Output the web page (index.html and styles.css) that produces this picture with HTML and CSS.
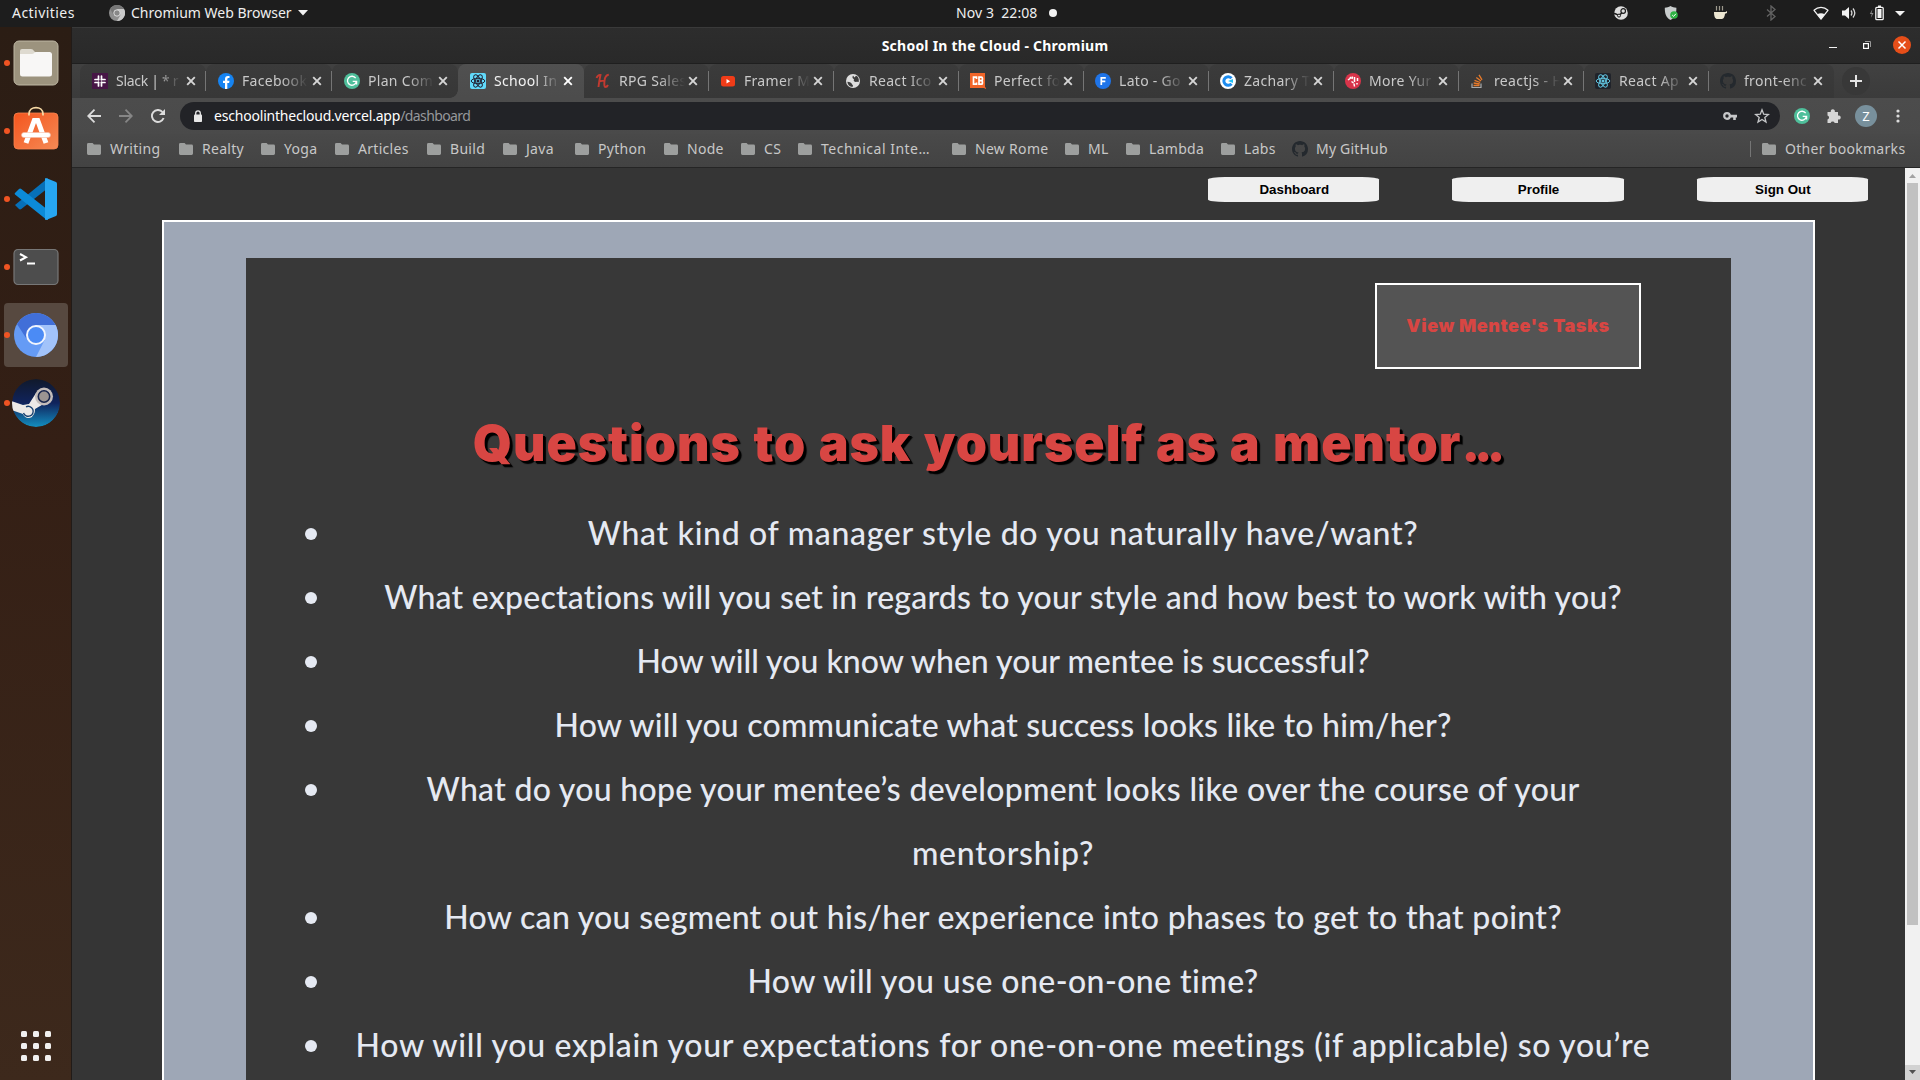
FILE: index.html
```
<!DOCTYPE html>
<html lang="en">
<head>
<meta charset="utf-8">
<title>School In the Cloud</title>
<link rel="stylesheet" href="styles.css">
</head>
<body>
<svg width="0" height="0" class="defs" aria-hidden="true">
  <symbol id="folder" viewBox="0 0 14 12"><path d="M1.4 0h4.2L7 1.5h5.6A1.4 1.4 0 0 1 14 2.9v7.7a1.4 1.4 0 0 1-1.4 1.4H1.4A1.4 1.4 0 0 1 0 10.6V1.4A1.4 1.4 0 0 1 1.4 0z" fill="#9d9f9e"/></symbol>
  <symbol id="close" viewBox="0 0 10 10"><path d="M1.2 1.2l7.6 7.6M8.8 1.2L1.2 8.8" stroke="currentColor" stroke-width="1.9"/></symbol>
  <symbol id="github" viewBox="0 0 16 16"><path fill="#24292e" d="M8 0C3.58 0 0 3.58 0 8c0 3.54 2.29 6.53 5.47 7.59.4.07.55-.17.55-.38 0-.19-.01-.82-.01-1.49-2.01.37-2.53-.49-2.69-.94-.09-.23-.48-.94-.82-1.13-.28-.15-.68-.52-.01-.53.63-.01 1.08.58 1.23.82.72 1.21 1.87.87 2.33.66.07-.52.28-.87.51-1.07-1.78-.2-3.64-.89-3.64-3.95 0-.87.31-1.59.82-2.15-.08-.2-.36-1.02.08-2.12 0 0 .67-.21 2.2.82.64-.18 1.32-.27 2-.27s1.36.09 2 .27c1.53-1.04 2.2-.82 2.2-.82.44 1.1.16 1.92.08 2.12.51.56.82 1.27.82 2.15 0 3.07-1.87 3.75-3.65 3.95.29.25.54.73.54 1.48 0 1.07-.01 1.93-.01 2.2 0 .21.15.46.55.38A8.01 8.01 0 0 0 16 8c0-4.42-3.58-8-8-8z"/></symbol>
  <symbol id="grammarly" viewBox="0 0 16 16"><circle cx="8" cy="8" r="8" fill="#4fbf9b"/><path d="M11.7 5.2A4.5 4.5 0 1 0 12.3 9M12.6 11.4V8.4H8.7" fill="none" stroke="#fff" stroke-width="1.3"/></symbol>
  <symbol id="atom" viewBox="0 0 16 16"><g fill="none" stroke="currentColor" stroke-width="1"><ellipse cx="8" cy="8" rx="6.8" ry="2.7"/><ellipse cx="8" cy="8" rx="6.8" ry="2.7" transform="rotate(60 8 8)"/><ellipse cx="8" cy="8" rx="6.8" ry="2.7" transform="rotate(120 8 8)"/></g><circle cx="8" cy="8" r="1.5" fill="currentColor"/></symbol>
</svg>

<header class="topbar">
  <span class="activities">Activities</span>
  <span class="app-menu">
    <svg width="16" height="16" viewBox="0 0 16 16"><circle cx="8" cy="8" r="8" fill="#8f8f8f"/><path d="M8 4h7A8 8 0 0 1 8 16l3.5-6z" fill="#c9c9c9"/><path d="M1.2 4L4.5 10 8 8 8 4h7A8 8 0 0 0 1.2 4z" fill="#777"/><circle cx="8" cy="8" r="3.2" fill="#888" stroke="#ddd" stroke-width="1"/></svg>
    <span class="app-name">Chromium Web Browser</span>
    <svg width="10" height="6" viewBox="0 0 10 6"><path d="M0 0h10L5 5.6z" fill="#f2f2f2"/></svg>
  </span>
  <span class="clock">Nov 3&ensp;22:08<i></i></span>
  <div class="status">
    <svg width="16" height="16" viewBox="0 0 16 16"><circle cx="8" cy="8" r="6.8" fill="#dedede"/><path d="M1 8.2l5.2 2.2L9.8 7" stroke="#1d1d1d" stroke-width="1.6" fill="none"/><circle cx="10.2" cy="6" r="2.3" fill="#dedede" stroke="#1d1d1d" stroke-width="1.2"/><circle cx="6" cy="10.6" r="1.5" fill="#dedede" stroke="#1d1d1d"/></svg>
    <svg width="16" height="16" viewBox="0 0 16 16"><path d="M7.500 1C5.500 2.300 4 2.600 1.800 2.800c0 6 1 9.500 5.700 12.200 4.700-2.700 5.900-6.200 5.900-12.200C11 2.600 9.500 2.300 7.500 1z" fill="#c8cccc"/><circle cx="11" cy="10" r="3.800" fill="#2fb344"/><path d="M9.200 10l1.400 1.400 2.300-2.600" stroke="#fff" fill="none"/></svg>
    <svg width="16" height="16" viewBox="0 0 16 16"><path d="M2 7h11.500l1.500-1v2l-2 .7c-.4 4-2 5.300-3.500 5.300H5.500C3 14 2 11.500 2 7z" fill="#ece6d2"/><path d="M4.500 1v4.500M7.500 1v4.500M10.500 1v4.500" stroke="#9c988c" stroke-width="1.200"/></svg>
    <svg width="16" height="16" viewBox="0 0 16 16"><path d="M4 4.500l8 7L8 15V1l4 3.500-8 7" stroke="#636363" stroke-width="1.300" fill="none"/></svg>
    <svg width="16" height="16" viewBox="0 0 16 16"><path d="M8 14L1 5.300C5 1.500 11 1.500 15 5.300z" fill="none" stroke="#f2f2f2" stroke-width="1.200" stroke-linejoin="round"/><path d="M8 14.400L4.300 9.300C6.500 7.800 9.500 7.800 11.700 9.300z" fill="#f2f2f2"/></svg>
    <svg width="16" height="16" viewBox="0 0 16 16"><path d="M1 5.500h3L8 2v12l-4-3.500H1z" fill="#f2f2f2"/><path d="M10 5.500q1.800 2.500 0 5M12 3.500q3.600 4.500 0 9" stroke="#d8d8d8" fill="none" stroke-width="1.300"/></svg>
    <svg width="16" height="16" viewBox="0 0 16 16"><path d="M3.500 4L.8 9h2l-1 4L4.500 8h-2z" fill="#8c8c8c"/><rect x="6.800" y="2.300" width="7.400" height="12.400" rx="1" fill="none" stroke="#f2f2f2" stroke-width="1.300"/><path d="M9 .5h3V2H9zM8.500 4h4v9h-4z" fill="#f2f2f2"/></svg>
    <svg width="16" height="16" viewBox="0 0 16 16"><path d="M3 6h10l-5 5z" fill="#f2f2f2"/></svg>
  </div>
</header>

<div class="desktop">
  <nav class="dock">
    <div class="launcher"><i></i>
      <svg width="48" height="48" viewBox="0 0 48 48"><rect x="2" y="2" width="44" height="44" rx="5" fill="#9c937e" stroke="#beb7a3"/><path d="M8 12a2 2 0 0 1 2-2h9q2 0 3 2l1 1v8H8z" fill="#dedad0"/><path d="M8 15h11.500q2 0 3-1.500L23.500 13H38a2.500 2.500 0 0 1 2 2v20a2.500 2.500 0 0 1-2.500 2.500h-27A2.500 2.500 0 0 1 8 35z" fill="#f8f7f6"/></svg></div>
    <div class="launcher"><i></i>
      <svg class="tall" width="48" height="48" viewBox="0 0 48 48"><defs><linearGradient id="bag" x2="1" y2="1"><stop stop-color="#f4551e"/><stop offset="1" stop-color="#f58a55"/></linearGradient></defs><rect x="2" y="6" width="44" height="36" rx="4" fill="url(#bag)" stroke="#f9844f" stroke-width=".8"/><path d="M17 8.500V7C17-1.500 31-1.500 31 7v1.500" fill="none" stroke="#f7d9a5" stroke-width="1.800"/><path d="M14 36L22.300 13.500h3.400L34 36" fill="none" stroke="#fff" stroke-width="5"/><rect x="9.500" y="25.500" width="29" height="5" rx="2.500" fill="#fff" stroke="#f5b79d" stroke-width=".6"/></svg></div>
    <div class="launcher"><i></i>
      <svg width="48" height="48" viewBox="0 0 48 48"><path d="M3 30l4 4q1 .8 2.300 0L36 13V3z" fill="#0770b8"/><path d="M3 18l4-4q1-.8 2.300 0L36 35v10q-1.500 0-3-1.500L3 19.500q-.8-.7 0-1.500z" fill="#0c8bd8"/><path d="M34 3l10 4q1 .5 1 2v30q0 1.500-1 2l-10 4q-1 0-1-1V4q0-1 1-1z" fill="#27a6f1"/></svg></div>
    <div class="launcher"><i></i>
      <svg width="48" height="48" viewBox="0 0 48 48"><rect x="2" y="6.500" width="44" height="35" rx="4" fill="#4d4d4d" stroke="#777" stroke-width="1.200"/><path d="M8 11l6 3.200-6 3.300M15 20.500h8" fill="none" stroke="#fff" stroke-width="2"/></svg></div>
    <div class="launcher active"><i></i>
      <svg width="48" height="48" viewBox="0 0 48 48"><circle cx="24" cy="24" r="22" fill="#659bf5"/><path d="M24 14h19.600A22 22 0 0 1 24 46l8.700-17z" fill="#a2c3fa"/><path d="M5 13A22 22 0 0 1 43.600 14H24L15.300 29z" fill="#416fd8"/><circle cx="24" cy="24" r="9" fill="#4b8bf5" stroke="#f1f5fd" stroke-width="2"/></svg></div>
    <div class="launcher"><i></i>
      <svg width="48" height="48" viewBox="0 0 48 48"><defs><linearGradient id="steam" x2="0" y2="1"><stop stop-color="#10192b"/><stop offset=".5" stop-color="#10235c"/><stop offset="1" stop-color="#138fc0"/></linearGradient><clipPath id="disc"><circle cx="24" cy="24" r="24"/></clipPath></defs><g clip-path="url(#disc)"><circle cx="24" cy="24" r="24" fill="url(#steam)"/><path d="M24 14L17 25l-6 1-12-4v9l12 4q3 6 9 3l3-8 12-7z" fill="#ece9e7"/><circle cx="32" cy="17.500" r="9" fill="#c4bdba"/><circle cx="32" cy="17.500" r="5.700" fill="#9c9592" stroke="#17244b" stroke-width="1.600"/><circle cx="16.500" cy="32" r="6.400" fill="#ece9e7"/><path d="M14 27.800a5 5 0 1 1-2.500 6.200" fill="none" stroke="#17406f" stroke-width="1.400"/></g></svg></div>
    <div class="app-grid"><b></b><b></b><b></b><b></b><b></b><b></b><b></b><b></b><b></b></div>
  </nav>

  <main class="window">
    <div class="titlebar">
      <span class="window-title">School In the Cloud - Chromium</span>
      <div class="controls">
        <svg width="8" height="8" viewBox="0 0 8 8"><path d="M0 6.500h8" stroke="#f2f2f2"/></svg>
        <svg width="8" height="8" viewBox="0 0 8 8"><rect x=".6" y="2.600" width="4.800" height="4.800" fill="none" stroke="#fff" stroke-width="1.200"/><path d="M2 .5h5.500V6" fill="none" stroke="#999"/></svg>
        <svg width="18" height="18" viewBox="0 0 18 18"><circle cx="9" cy="9" r="9" fill="#e64e19"/><path d="M5.500 5.500l7 7M12.500 5.500l-7 7" stroke="#fff" stroke-width="1.500"/></svg>
      </div>
    </div>

    <div class="tabs">
      <div class="tab wide slack"><svg class="fav" viewBox="0 0 16 16"><path d="M0 0h16v16H0z" fill="#471646"/><path d="M6.500 3v3.800M9.500 3v3.800M6.500 9.200V13M9.500 9.200V13M3 6.500h3.800M9.200 6.500H13M3 9.500h3.800M9.200 9.500H13" stroke="#fff" stroke-width="1.700" stroke-linecap="round"/></svg><span>Slack | * r</span><svg class="x"><use href="#close"/></svg></div>
      <div class="tab wide"><svg class="fav" viewBox="0 0 16 16"><circle cx="8" cy="8" r="8" fill="#1684f2"/><path d="M7 16V10H5V7.700h2V6q0-3 2.900-3l1.600.1v2h-1Q9.300 5.100 9.300 6.300v1.400h2.200L11.100 10H9.300v6z" fill="#fff"/></svg><span>Facebook</span><svg class="x"><use href="#close"/></svg></div>
      <div class="tab wide last"><svg class="fav"><use href="#grammarly"/></svg><span>Plan Com</span><svg class="x"><use href="#close"/></svg></div>
      <div class="tab wide current"><svg class="fav cyan"><use href="#atom"/></svg><span>School In</span><svg class="x"><use href="#close"/></svg></div>
      <div class="tab"><svg class="fav" viewBox="0 0 16 16"><path d="M1.500 5Q3 1.500 5.500 2 4.500 6 3.500 14M13.800 1.800Q10 2 9.500 8 8.800 14 10.500 14q1.500 0 2.500-2M4 8.500q4-1 6-.8" fill="none" stroke="#c23a30" stroke-width="1.900"/></svg><span>RPG Sales</span><svg class="x"><use href="#close"/></svg></div>
      <div class="tab"><svg class="fav" viewBox="0 0 16 16"><rect x="1" y="3" width="14" height="10.500" rx="2.500" fill="#f03c18"/><path d="M6.500 6v4.600L10.200 8.300z" fill="#fff"/></svg><span>Framer M</span><svg class="x"><use href="#close"/></svg></div>
      <div class="tab"><svg class="fav" viewBox="0 0 16 16"><circle cx="8" cy="8" r="7" fill="#dedede"/><path d="M2.300 8.800q4 .5 4.700 2.400 1.800 1 .5 2.800Q3 13.500 2.300 8.800zM8 2.500Q6.500 5 9 6.300q-1 2 1.500 2.700 1.500-.5 3.200 0Q14.500 4 11 2.800L9.500 4.500z" fill="#3c3c3c"/></svg><span>React Ico</span><svg class="x"><use href="#close"/></svg></div>
      <div class="tab"><svg class="fav" viewBox="0 0 16 16"><path d="M0 0h15v14.500h1V16l-2-1H0z" fill="#f16529"/><path d="M6.500 6V4.200h-3v7h3V9.500M9 4.200h2.400q1 0 1 1v1.500q0 1-1 1H9h2.400q1 0 1 1v1.500q0 1-1 1H9z" fill="none" stroke="#fff" stroke-width="1.700"/></svg><span>Perfect fo</span><svg class="x"><use href="#close"/></svg></div>
      <div class="tab"><svg class="fav" viewBox="0 0 16 16"><circle cx="8" cy="8" r="8" fill="#1f74e8"/><path d="M6.300 12V4.800h4.500M6.300 8.300h4" fill="none" stroke="#fff" stroke-width="1.700"/></svg><span>Lato - Go</span><svg class="x"><use href="#close"/></svg></div>
      <div class="tab"><svg class="fav" viewBox="0 0 16 16"><circle cx="8" cy="8" r="8" fill="#fff"/><path d="M11.500 5.300A4.300 4.300 0 1 0 11.500 10.700" fill="none" stroke="#1c8cf0" stroke-width="3"/><path d="M8 8l5-2v4z" fill="#24c2f4"/></svg><span>Zachary T</span><svg class="x"><use href="#close"/></svg></div>
      <div class="tab"><svg class="fav" viewBox="0 0 16 16"><circle cx="8" cy="8" r="8" fill="#d8344a"/><path d="M3 7l2-1.500M5 4l1 1.500M7 6l.5-2.500M9.500 4v5M12.500 5v3M6.500 8.500l2 1.500M9 10.500l.5 3M12 10v1.500" stroke="#fff" stroke-width="1.500"/></svg><span>More Yur</span><svg class="x"><use href="#close"/></svg></div>
      <div class="tab"><svg class="fav" viewBox="0 0 16 16"><path d="M2 10.500v4h9v-4" fill="none" stroke="#a8abad" stroke-width="1.200"/><path d="M3.500 12.500h6M3.700 10l6 1M4.500 7.300l5.700 2.200M6.300 4.500l4.700 3.600M9 1.800l3 5" stroke="#e87a2a" stroke-width="1.300"/></svg><span>reactjs - H</span><svg class="x"><use href="#close"/></svg></div>
      <div class="tab"><svg class="fav dark"><use href="#atom"/></svg><span>React Ap</span><svg class="x"><use href="#close"/></svg></div>
      <div class="tab last"><svg class="fav"><use href="#github"/></svg><span>front-enc</span><svg class="x"><use href="#close"/></svg></div>
      <div class="new-tab"><svg width="12" height="12" viewBox="0 0 12 12"><path d="M6 0v12M0 6h12" stroke="#e4e4e4" stroke-width="2"/></svg></div>
    </div>

    <div class="toolbar">
      <svg width="14" height="14" viewBox="0 0 14 14"><path d="M14 7H1.500M7.500.7L1.200 7l6.300 6.300" fill="none" stroke="#dcdcdc" stroke-width="1.800"/></svg>
      <svg width="14" height="14" viewBox="0 0 14 14"><path d="M0 7h12.500M6.500.7L12.800 7l-6.300 6.300" fill="none" stroke="#868686" stroke-width="1.800"/></svg>
      <svg width="14" height="14" viewBox="0 0 14 14"><path d="M12.600 9A6 6 0 1 1 11.500 3" fill="none" stroke="#dcdcdc" stroke-width="1.900"/><path d="M14 0v6H8z" fill="#dcdcdc"/></svg>
      <div class="omnibox">
        <svg width="10" height="13" viewBox="0 0 10 13"><rect x="1" y="4.500" width="8" height="7.500" rx=".8" fill="#e8e8e8"/><path d="M2.700 5V3.200a2.300 2.300 0 0 1 4.600 0V5" fill="none" stroke="#e8e8e8" stroke-width="1.300"/></svg>
        <span class="url">eschoolinthecloud.vercel.app<em>/dashboard</em></span>
        <svg width="14" height="10" viewBox="0 0 14 10"><circle cx="4" cy="5" r="2.800" fill="none" stroke="#c6c7c9" stroke-width="2.200"/><path d="M7 3.800h7v2.600h-1.200V9h-2.600V6.400H7z" fill="#c6c7c9"/></svg>
        <svg width="16" height="16" viewBox="0 0 16 16"><path d="M8 1.800l1.700 4.400 4.700.3-3.600 3 1.200 4.600L8 11.500l-4 2.600 1.200-4.600-3.600-3 4.700-.3z" fill="none" stroke="#c6c7c9" stroke-width="1.300"/></svg>
      </div>
      <svg width="16" height="16"><use href="#grammarly"/></svg>
      <svg class="puzzle" width="16" height="16" viewBox="0 0 16 16"><path d="M1.500 4h3.300a2.100 2.100 0 1 1 4 0h3.200v3.500a2.100 2.100 0 1 1 0 4V15H8.700a2.200 2.200 0 0 0-4.100 0H1.500v-3.600a2 2 0 0 0 0-3.900z" fill="#d6d6d6"/></svg>
      <span class="avatar">Z</span>
      <svg width="4" height="14" viewBox="0 0 4 14"><g fill="#dcdcdc"><circle cx="2" cy="2" r="1.600"/><circle cx="2" cy="7" r="1.600"/><circle cx="2" cy="12" r="1.600"/></g></svg>
    </div>

    <div class="bookmarks">
      <span><svg><use href="#folder"/></svg>Writing</span>
      <span><svg><use href="#folder"/></svg>Realty</span>
      <span><svg><use href="#folder"/></svg>Yoga</span>
      <span><svg><use href="#folder"/></svg>Articles</span>
      <span><svg><use href="#folder"/></svg>Build</span>
      <span><svg><use href="#folder"/></svg>Java</span>
      <span><svg><use href="#folder"/></svg>Python</span>
      <span><svg><use href="#folder"/></svg>Node</span>
      <span><svg><use href="#folder"/></svg>CS</span>
      <span class="long"><svg><use href="#folder"/></svg>Technical Inte…</span>
      <span><svg><use href="#folder"/></svg>New Rome</span>
      <span><svg><use href="#folder"/></svg>ML</span>
      <span><svg><use href="#folder"/></svg>Lambda</span>
      <span><svg><use href="#folder"/></svg>Labs</span>
      <span class="gh"><svg><use href="#github"/></svg>My GitHub</span>
      <span class="other"><svg><use href="#folder"/></svg>Other bookmarks</span>
    </div>

    <div class="viewport">
      <div class="page">
        <nav class="site-nav">
          <button>Dashboard</button><button>Profile</button><button>Sign Out</button>
        </nav>
        <section class="frame">
          <div class="panel">
            <button class="tasks">View Mentee's Tasks</button>
            <h1>Questions to ask yourself as a mentor<span>...</span></h1>
            <ul>
              <li><p>What kind of manager style do you naturally have/want?</p></li>
              <li><p>What expectations will you set in regards to your style and how best to work with you?</p></li>
              <li><p>How will you know when your mentee is successful?</p></li>
              <li><p>How will you communicate what success looks like to him/her?</p></li>
              <li><p>What do you hope your mentee’s development looks like over the course of your <span>mentorship?</span></p></li>
              <li><p>How can you segment out his/her experience into phases to get to that point?</p></li>
              <li><p>How will you use one-on-one time?</p></li>
              <li><p>How will you explain your expectations for one-on-one meetings (if applicable) so you’re</p></li>
            </ul>
          </div>
        </section>
      </div>
      <div class="scrollbar">
        <svg width="15" height="15" viewBox="0 0 15 15"><path d="M4 10h7L7.500 6z" fill="#a3a3a3"/></svg>
        <div class="thumb"></div>
        <svg class="down" width="15" height="15" viewBox="0 0 15 15"><path d="M4 5h7L7.500 9z" fill="#505050"/></svg>
      </div>
    </div>
  </main>
</div>
</body>
</html>
```
FILE: styles.css
```
* { box-sizing: border-box; }
body {
  margin: 0;
  width: 1920px;
  height: 1080px;
  overflow: hidden;
  display: flex;
  flex-direction: column;
  background: #353535;
  font: 14px/20px "Noto Sans", sans-serif;
  letter-spacing: .3px;
  white-space: nowrap;
}
svg { display: block; flex: none; }
.defs { position: absolute; }

/* GNOME top bar */
.topbar {
  flex: none;
  height: 27px;
  background: #1d1d1d;
  color: #efefef;
  display: grid;
  grid-template-columns: 97px 847px 669px 1fr;
  align-items: center;
  padding-left: 12px;
}
.topbar > * { margin-top: -1px; }
.activities { letter-spacing: .45px; }
.app-menu { display: flex; align-items: center; gap: 6px; letter-spacing: 0; }
.clock { display: flex; align-items: center; letter-spacing: .1px; }
.clock i { width: 8px; height: 8px; border-radius: 50%; background: #f2f2f2; margin-left: 12px; }
.topbar > .status { margin-left: -12px; display: grid; grid-template-columns: 50px 49px 51px 50px 28px 28px 23px 28px; }

.desktop { flex: 1; min-height: 0; display: flex; }

/* Dock */
.dock {
  flex: none;
  width: 72px;
  padding: 4px 4px 18px;
  display: flex;
  flex-direction: column;
  gap: 4px;
  border-right: 1px solid #211b18;
  background: linear-gradient(#2b1d14, #341f15 40%, #3d291c);
}
.launcher { height: 64px; width: 64px; display: flex; align-items: center; border-radius: 4px; }
.launcher i { width: 6px; height: 6px; border-radius: 50%; background: #f05423; margin-right: 2px; }
.launcher.active { background: #574940; }
.tall { overflow: visible; }
.app-grid { margin: auto 0 0 17px; display: grid; grid-template-columns: repeat(3, 6px); gap: 6px; padding-bottom: 1px; }
.app-grid b { width: 6px; height: 6px; border-radius: 1.5px; background: #f1f0ef; }

/* Window chrome */
.window { flex: 1; min-width: 0; display: flex; flex-direction: column; }
.titlebar {
  flex: none;
  height: 37px;
  background: linear-gradient(#2d2d2d, #292929);
  border-top: 1px solid #3a3a3a;
  border-bottom: 1px solid #1f1f1f;
  display: flex;
  align-items: center;
  color: #fff;
}
.window-title { flex: 1; text-align: center; font-weight: bold; letter-spacing: .23px; padding-left: 89px; }
.controls { display: flex; align-items: center; gap: 26px; margin: -1px 9px 0 0; }
.controls svg:last-child { margin-left: -4px; }

.tabs {
  flex: none;
  height: 34px;
  padding-left: 8px;
  background: linear-gradient(#414141, #3b3b3b);
  display: flex;
  color: #c9c9c9;
}
.tab {
  width: 125px;
  padding: 0 11px;
  display: flex;
  align-items: center;
  position: relative;
  background: linear-gradient(#3b3b3b, #373737);
  border-radius: 8px 8px 0 0;
}
.tab.wide { width: 126px; padding: 0 10px 0 12px; }
.tab.current { padding-right: 11px; }
.tab .fav { width: 16px; height: 16px; margin-right: 8px; }
.tab span {
  width: 66px;
  margin-right: -5px;
  -webkit-mask: linear-gradient(90deg, #000 60%, transparent 100%);
  mask: linear-gradient(90deg, #000 60%, transparent 100%);
}
.tab.slack span { letter-spacing: -.3px; }
.tab .x { width: 10px; height: 10px; margin-left: auto; color: #d5d5d5; }
.tab:not(.current):not(.last)::after {
  content: "";
  position: absolute;
  right: 0;
  top: 7px;
  width: 1px;
  height: 20px;
  background: #757575;
}
.tab.current { background: linear-gradient(#505050, #4c4c4c); color: #f2f2f2; }
.tab.current .x { color: #fff; }
.tab.current::before, .tab.current::after {
  content: "";
  position: absolute;
  bottom: 0;
  width: 8px;
  height: 8px;
}
.tab.current::before { left: -8px; background: radial-gradient(circle at 0 0, transparent 7.5px, #4c4c4c 8px); }
.tab.current::after { right: -8px; background: radial-gradient(circle at 100% 0, transparent 7.5px, #4c4c4c 8px); }
.cyan { background: #61dafb; color: #223; border-radius: 2px; }
.dark { background: #20232a; color: #61c5e0; border-radius: 2px; }
.new-tab {
  width: 28px;
  height: 28px;
  margin: 3px 0 0 8px;
  border-radius: 50%;
  background: #383838;
  display: grid;
  place-items: center;
}

.toolbar {
  flex: none;
  height: 36px;
  padding: 0 20px 0 15px;
  background: linear-gradient(#4c4c4c, #4a4a4a);
  display: flex;
  align-items: center;
  gap: 18px;
}
.omnibox {
  width: 1600px;
  flex: none;
  height: 28px;
  margin: 0 -4px 0 -3px;
  padding: 0 10px 0 13px;
  border-radius: 14px;
  background: #222327;
  display: flex;
  align-items: center;
  gap: 17px;
}
.url { flex: 1; margin-left: -6px; color: #fff; letter-spacing: -.2px; }
.url em { font-style: normal; color: #96989b; letter-spacing: -.6px; }
.puzzle { margin-left: -2px; }
.avatar {
  width: 22px;
  flex: none;
  height: 22px;
  margin: 0 3px 0 -5px;
  border-radius: 50%;
  background: #78909c;
  color: #fff;
  font-size: 13px;
  line-height: 22px;
  text-align: center;
}
.toolbar > svg:last-child { margin-left: -2px; }
.bookmarks {
  flex: none;
  height: 34px;
  padding: 0 0 0 15px;
  background: linear-gradient(#494949, #434343);
  border-bottom: 1px solid #252525;
  color: #c8c8c8;
  display: grid;
  grid-template-columns: 92px 82px 74px 92px 76px 72px 89px 77px 57px 154px 113px 61px 95px 71px 458px 1fr;
}
.bookmarks span { display: flex; align-items: center; height: 30px; }
.bookmarks svg { width: 14px; height: 12px; margin-right: 9px; }
.bookmarks .gh svg { width: 16px; height: 16px; margin-right: 8px; }
.bookmarks .gh { letter-spacing: .2px; }
.bookmarks .long { letter-spacing: .5px; }
.bookmarks .other::before { content: ""; width: 1px; height: 16px; background: #757575; margin-right: 11px; }

/* Web page */
.viewport { flex: 1; min-height: 0; display: flex; overflow: hidden; }
.page { flex: 1; height: 912px; overflow: hidden; background: #353535; }
.site-nav { display: flex; justify-content: flex-end; gap: 73px; padding: 9px 37px 0 0; }
.site-nav button {
  width: 171.300px;
  height: 25px;
  border: 0;
  padding: 0 0 0 1px;
  border-radius: 10%;
  background: #efefef;
  color: #000;
  font: bold 13.333px "Liberation Sans", Arial, sans-serif;
}
.frame {
  width: 1653px;
  height: 1500px;
  margin: 18px 0 0 90px;
  padding: 36px 82px;
  border: 2px solid #fff;
  background: #9ea7b6;
}
.panel {
  height: 1400px;
  padding-top: 25px;
  background: #383838;
  display: flex;
  flex-direction: column;
}
.tasks {
  align-self: flex-end;
  width: 266px;
  height: 86px;
  margin-right: 90px;
  padding: 0 0 2px;
  border: 2px solid #fff;
  background: #545454;
  color: #d84643;
  font: 900 18px Inter, sans-serif;
  letter-spacing: .57px;
}
h1 {
  margin: 42px 0 0;
  padding-right: 5px;
  text-align: center;
  color: #d84643;
  font: 900 50px/64px Inter, sans-serif;
  letter-spacing: .98px;
  word-spacing: 1.6px;
  text-shadow: 2px 2px 0 #000, 3px 3px 1px #000;
}
h1 span { letter-spacing: -6px; }
ul { list-style: none; margin: 26px 0 0; padding: 0 78px 0 59px; }
li { display: flex; gap: 36px; color: #e5e9f2; font: 500 32px/64px Lato, sans-serif; }
li::before { content: ""; flex: none; width: 12px; height: 12px; margin-top: 27px; border-radius: 50%; background: #e5e9f2; }
li p { margin: 0; width: 1300px; text-align: center; white-space: normal; }
li:nth-child(1) { letter-spacing: .67px; }
li:nth-child(2) { letter-spacing: .23px; }
li:nth-child(3) { letter-spacing: 0; }
li:nth-child(4) { letter-spacing: .22px; }
li:nth-child(5) { letter-spacing: .29px; }
li:nth-child(5) span { letter-spacing: .8px; }
li:nth-child(6) { letter-spacing: .3px; }
li:nth-child(7) { letter-spacing: .42px; }
li:nth-child(8) { letter-spacing: .69px; }

.scrollbar { width: 15px; background: #f1f1f1; display: flex; flex-direction: column; align-items: center; }
.thumb { width: 11px; height: 742px; background: #c1c1c1; }
.down { margin-top: auto; background: #d2d2d2; }
```
